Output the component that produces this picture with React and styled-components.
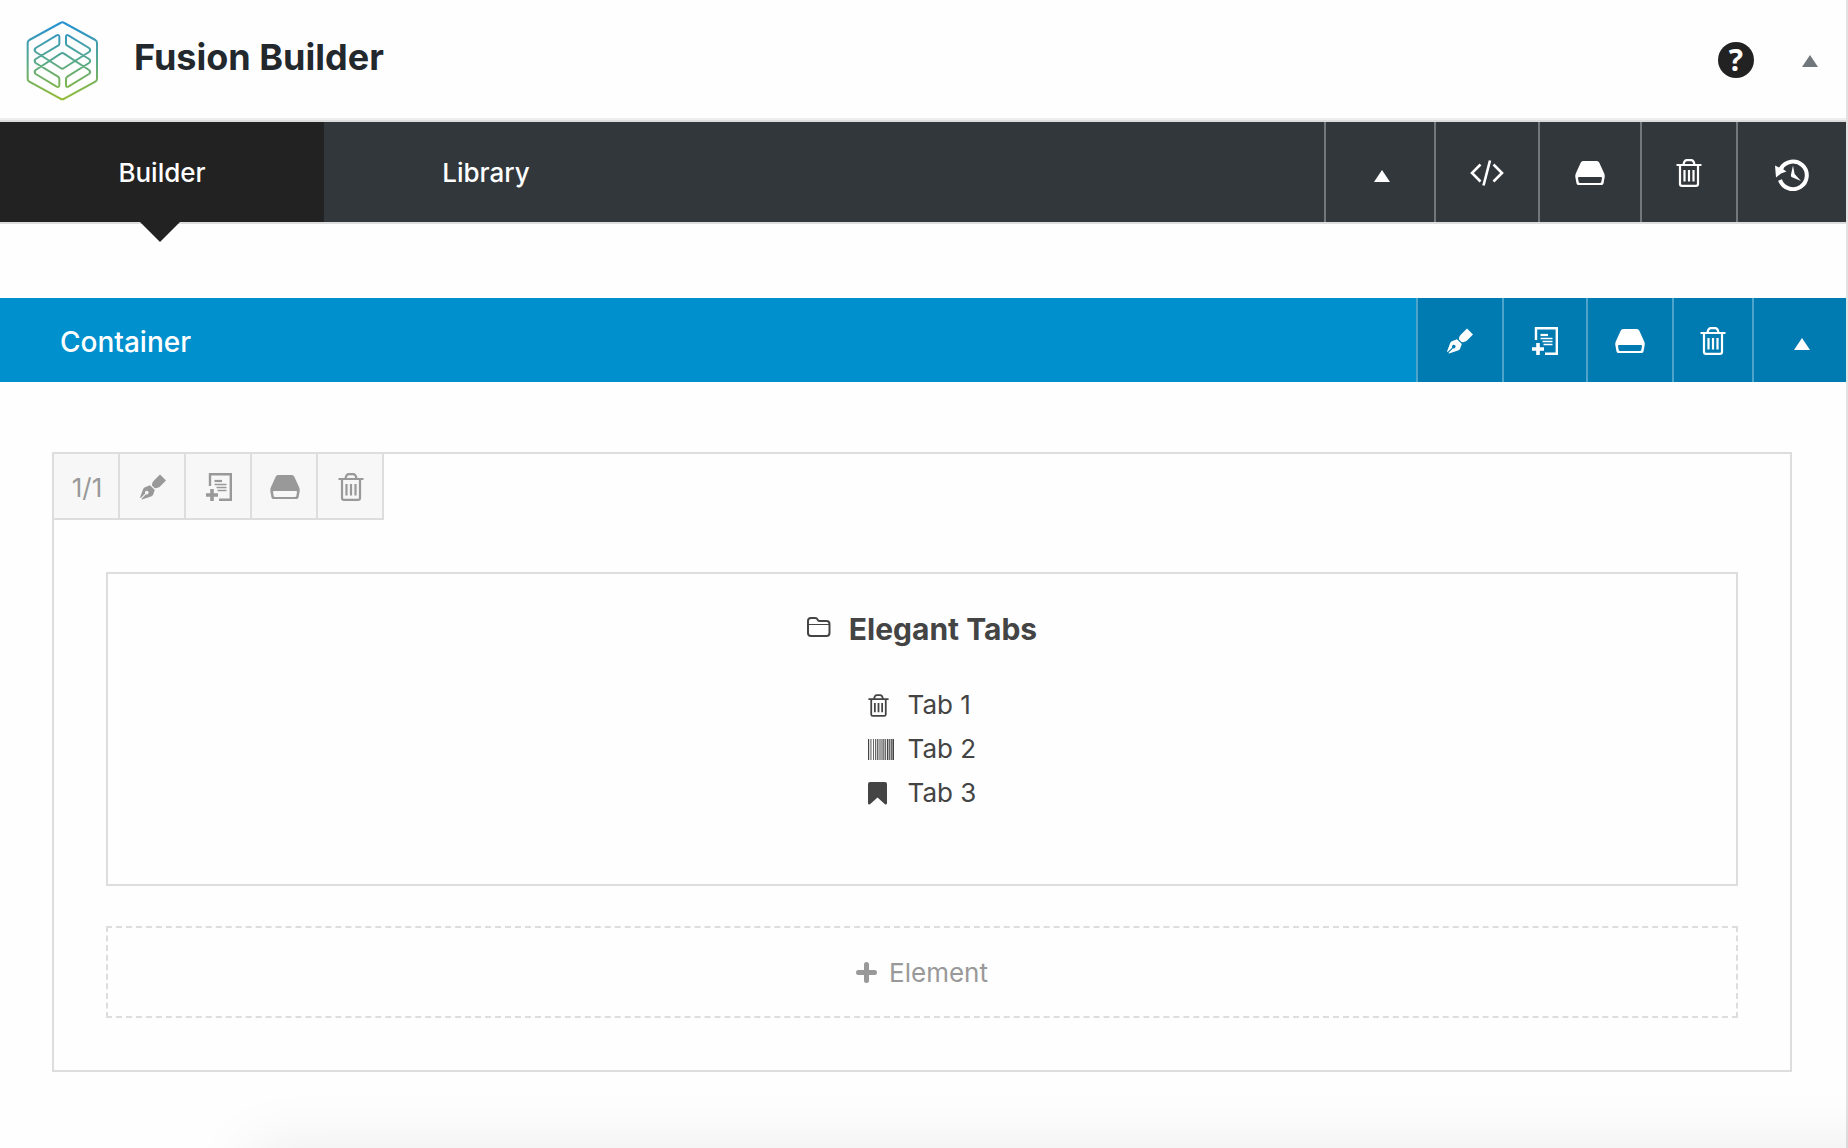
import styled, { createGlobalStyle } from "styled-components";

const GlobalStyle = createGlobalStyle`
  * {
    box-sizing: border-box;
  }
  body {
    margin: 0;
    background: #fefefe;
    font-family: Inter, "Liberation Sans", sans-serif;
    overflow-x: hidden;
  }
  button {
    font: inherit;
    border: 0;
    padding: 0;
    background: none;
    color: inherit;
    cursor: pointer;
  }
  svg {
    display: block;
    flex: none;
  }
`;

const Page = styled.div`
  min-height: 100vh;
  border-right: 2px solid #e2e2e2;
`;

const Header = styled.header`
  display: flex;
  align-items: center;
  height: 120px;
  padding: 4px 28px 0 26px;
  border-bottom: 2px solid #eee;
  color: #23282d;
`;

const Title = styled.h1`
  flex: 1;
  margin: 0 0 8px 36px;
  font-size: 36px;
  line-height: 44px;
  font-weight: 700;
`;

const Help = styled.button`
  width: 36px;
  height: 36px;
  margin: 0 48px 2px 0;
  border-radius: 50%;
  background: #222;
  color: #fff;
  font-family: "Open Sans", sans-serif;
  font-size: 30px;
  line-height: 36px;
  font-weight: 700;
`;

const Collapse = styled.button`
  color: #72777c;
`;

const NavBar = styled.nav`
  display: flex;
  height: 104px;
  border: solid #ddd;
  border-width: 2px 0;
  background: #32373c;
  color: #fff;
`;

const Tab = styled.button`
  position: relative;
  width: 324px;
  font-size: 26px;
  font-weight: 500;
  background: ${({ $active }) => ($active ? "#222" : "transparent")};
  &::after {
    content: "";
    display: ${({ $active }) => ($active ? "block" : "none")};
    position: absolute;
    top: 100%;
    left: 50%;
    margin-left: -22px;
    border: 20px solid transparent;
    border-top-color: #222;
    border-bottom: 0;
  }
`;

const Actions = styled.div`
  display: flex;
  margin-left: auto;
`;

const NavAction = styled.button`
  display: flex;
  align-items: center;
  justify-content: center;
  width: ${({ $width }) => $width}px;
  padding: ${({ $low }) => ($low ? "8px 0 0 4px" : "2px 0 0")};
  border-left: 2px solid #72777c;
`;

const ContainerBar = styled.div`
  display: flex;
  height: 84px;
  margin-top: 74px;
  background: #0090ce;
  color: #fff;
`;

const ContainerName = styled.h2`
  margin: 0;
  padding-left: 60px;
  font-size: 28px;
  line-height: 88px;
  font-weight: 500;
`;

const ContainerAction = styled(NavAction)`
  background: #007bb1;
  border-left-color: #4da3c9;
`;

const Column = styled.section`
  margin: 70px 54px 0 52px;
  border: 2px solid #ddd;
`;

const ColumnTools = styled.div`
  display: flex;
  color: #999;
`;

const ColumnAction = styled.button`
  display: flex;
  align-items: center;
  justify-content: center;
  width: 66px;
  height: 66px;
  padding: 2px 0 0 2px;
  border: solid #ddd;
  border-width: 0 2px 2px 0;
  background: #f7f7f7;
  font-size: 26px;
`;

const ColumnBody = styled.div`
  display: flex;
  flex-direction: column;
  gap: 40px;
  padding: 52px;
`;

const Element = styled.article`
  display: flex;
  flex-direction: column;
  align-items: center;
  gap: 34px;
  padding: 35px 0 69px;
  border: 2px solid #ddd;
  color: #444;
`;

const ElementTitle = styled.h3`
  display: flex;
  align-items: center;
  gap: 18px;
  margin: 0;
  font-size: 30px;
  line-height: 40px;
  font-weight: 700;
  svg {
    margin-bottom: 4px;
  }
`;

const TabList = styled.ul`
  margin: 0;
  padding: 0;
  list-style: none;
`;

const TabItem = styled.li`
  display: grid;
  grid-template-columns: 40px auto;
  align-items: center;
  font-size: 26px;
  line-height: 44px;
`;

const AddElement = styled.button`
  display: flex;
  align-items: center;
  justify-content: center;
  gap: 12px;
  height: 92px;
  border: 2px dashed #ddd;
  color: #999;
  font-size: 26px;
`;

// soft shadow that rises from below the lower edge of the window
const BottomShade = styled.div`
  position: fixed;
  left: 250px;
  right: -80px;
  bottom: -80px;
  height: 80px;
  box-shadow: 0 0 64px rgba(0, 0, 0, 0.08);
  pointer-events: none;
`;

const Logo = () => (
  <svg width="72" height="80" viewBox="78 62 216 240" fill="none">
    <defs>
      <linearGradient id="logo" gradientUnits="userSpaceOnUse" x1="187" y1="64" x2="187" y2="298">
        <stop offset="0" stopColor="#2490d6" />
        <stop offset="0.5" stopColor="#58a98c" />
        <stop offset="1" stopColor="#93bb33" />
      </linearGradient>
    </defs>
    <g stroke="url(#logo)" strokeWidth="6" strokeLinejoin="round">
      <path d="M181 68Q187 64 193 68L286 119Q291 122 291 128V235Q291 241 286 244L193 295Q187 299 181 295L88 244Q83 241 83 235V128Q83 122 88 119Z" />
      <path d="M178 130V110Q178 102 170 105L107 143Q101 149 107 155L182 203Q187 207 192 203L267 155Q274 149 267 143L205 105Q198 102 198 110V130Q198 134 202 136L267 176Q274 182 267 188L202 229Q198 232 198 236V254Q198 262 205 259L267 221Q274 215 267 209L192 160Q187 156 182 160L107 209Q101 215 107 221L170 259Q178 262 178 254V236Q178 232 174 229L107 188Q101 182 107 176L174 136Q178 134 178 130Z" />
    </g>
  </svg>
);

const Triangle = () => (
  <svg width="16" height="12" viewBox="0 0 16 12" fill="currentColor">
    <path d="M8 0L16 12H0Z" />
  </svg>
);

const CodeIcon = () => (
  <svg width="34" height="26" viewBox="0 0 34 26" fill="none" stroke="currentColor" strokeWidth="2.6">
    <path d="M10.500 4.500L2 13L10.500 21.500M23.500 4.500L32 13L23.500 21.500M20 0.500L13.500 25.500" />
  </svg>
);

const DriveIcon = () => (
  <svg width="30" height="24" viewBox="0 0 30 24" fill="currentColor" fillRule="evenodd">
    <path d="M8 0H22Q23.500 0 24.200 1.500L29 12Q30 14 29.700 16L28.500 22.500Q28 24 26.500 24H3.500Q2 24 1.500 22.500L0.300 16Q0 14 1 12L5.800 1.500Q6.500 0 8 0ZM4 16Q3 16 3 17L3.700 21Q4 22 5 22H25Q26 22 26.300 21L27 17Q27 16 26 16Z" />
  </svg>
);

const TrashIcon = ({ size = 28 }) => (
  <svg width={size - 2} height={size} viewBox="0 0 26 28" fill="none" stroke="currentColor" strokeWidth="2.2">
    <path d="M0.500 6H25.500M7.500 6Q8 1.200 11 1.200H15Q18 1.200 18.500 6M4 6V25Q4 26.800 6 26.800H20Q22 26.800 22 25V6M8.500 11V22.500M13 11V22.500M17.500 11V22.500" />
  </svg>
);

const HistoryIcon = () => (
  <svg width="34" height="36" viewBox="0 -4 34 36">
    <path d="M6 9.500A13.800 13.800 0 1 1 5 21" fill="none" stroke="currentColor" strokeWidth="4" />
    <path d="M0 6.500L4 8.500L8 6L8.500 10.500L11.500 12.500L6 14.500L1 18.500Z" fill="currentColor" />
    <path d="M18 6.500L19.600 15L26 22L16.500 18Q15.600 17 16 15.500Z" fill="currentColor" />
  </svg>
);

const PenIcon = () => (
  <svg width="26" height="26" viewBox="0 0 26 26" fill="currentColor" fillRule="evenodd">
    <path d="M20 0.500L26 6.500L19.500 13Q17 14.500 14.500 14L12 11.500Q11.500 9 13.500 7Z" />
    <path d="M10 11.200L14.800 16L13.200 20.500Q12.700 22 11 22.500L2 25.500L1.400 24.900L6 20.200A1.800 1.800 0 1 0 5.200 19.400L0.700 24.100L0 23.500L3.200 15Q3.800 13.300 5.500 12.900Z" />
  </svg>
);

const CloneIcon = () => (
  <svg width="26" height="28" viewBox="0 0 26 28" fill="none" stroke="currentColor">
    <path d="M4 13V1.200H24.800V26.800H13" strokeWidth="2.400" />
    <path d="M6 16V28M0 22H12" strokeWidth="3.600" />
    <path d="M8.500 8H16" strokeWidth="2.200" />
    <path d="M8.500 11.500H20.500M10.500 14.500H20.500M11.500 17.500H20.500" strokeWidth="1.500" />
  </svg>
);

const FolderIcon = () => (
  <svg width="24" height="20" viewBox="0 0 24 20" fill="none" stroke="currentColor" strokeWidth="2">
    <path d="M1 4Q1 1 4 1H8Q10 1 10.500 2.500Q11 4 12.500 4H19.500Q22.500 4 22.500 7V16Q22.500 19 19.500 19H4Q1 19 1 16Z" />
    <path d="M1 7.500H22.500" strokeWidth="1" />
  </svg>
);

const BARS = [
  [0, 1.2], [2, 0.5], [3.2, 0.4], [5.2, 0.8], [7.2, 1], [9.2, 1.1], [10.9, 0.6], [12.2, 0.5],
  [13.5, 1], [15.3, 1.1], [17.2, 0.9], [19, 1.4], [21.2, 0.8], [22.6, 1.2], [24.4, 1.6],
];

const BarcodeIcon = () => (
  <svg width="26" height="21" viewBox="0 0 26 21" fill="currentColor">
    {BARS.map(([x, w]) => (
      <rect key={x} x={x} width={w} height="21" />
    ))}
  </svg>
);

const BookmarkIcon = () => (
  <svg width="19" height="23" viewBox="0 0 19 23" fill="currentColor">
    <path d="M2 0H17Q19 0 19 2V21.500Q18.500 23 17 22.300L9.500 15.500L2 22.300Q0.500 23 0 21.500V2Q0 0 2 0Z" />
  </svg>
);

const PlusIcon = () => (
  <svg width="21" height="21" viewBox="0 0 21 21" fill="none" stroke="currentColor">
    <path d="M10.500 2.500V18.500M2.500 10.500H18.500" strokeWidth="5" strokeLinecap="round" strokeLinejoin="round" />
  </svg>
);

const navActions = [
  { label: "Toggle all", width: 110, low: true, icon: <Triangle /> },
  { label: "Custom CSS", width: 104, icon: <CodeIcon /> },
  { label: "Save template", width: 102, icon: <DriveIcon /> },
  { label: "Delete all", width: 96, icon: <TrashIcon /> },
  { label: "History", width: 110, icon: <HistoryIcon /> },
];

const containerActions = [
  { label: "Edit container", width: 86, icon: <PenIcon /> },
  { label: "Clone container", width: 84, icon: <CloneIcon /> },
  { label: "Save container", width: 86, icon: <DriveIcon /> },
  { label: "Delete container", width: 80, icon: <TrashIcon /> },
  { label: "Toggle container", width: 94, low: true, icon: <Triangle /> },
];

const columnActions = [
  { label: "Edit column", icon: <PenIcon /> },
  { label: "Clone column", icon: <CloneIcon /> },
  { label: "Save column", icon: <DriveIcon /> },
  { label: "Delete column", icon: <TrashIcon /> },
];

const tabs = [
  { name: "Tab 1", icon: <TrashIcon size={23} /> },
  { name: "Tab 2", icon: <BarcodeIcon /> },
  { name: "Tab 3", icon: <BookmarkIcon /> },
];

const App = () => {
  return (
    <Page>
      <GlobalStyle />
      <Header>
        <Logo />
        <Title>Fusion Builder</Title>
        <Help aria-label="Help">?</Help>
        <Collapse aria-label="Collapse panel">
          <Triangle />
        </Collapse>
      </Header>
      <NavBar>
        <Tab $active>Builder</Tab>
        <Tab>Library</Tab>
        <Actions>
          {navActions.map(({ label, width, low, icon }) => (
            <NavAction key={label} aria-label={label} $width={width} $low={low}>
              {icon}
            </NavAction>
          ))}
        </Actions>
      </NavBar>
      <ContainerBar>
        <ContainerName>Container</ContainerName>
        <Actions>
          {containerActions.map(({ label, width, low, icon }) => (
            <ContainerAction key={label} aria-label={label} $width={width} $low={low}>
              {icon}
            </ContainerAction>
          ))}
        </Actions>
      </ContainerBar>
      <Column>
        <ColumnTools>
          <ColumnAction>1/1</ColumnAction>
          {columnActions.map(({ label, icon }) => (
            <ColumnAction key={label} aria-label={label}>
              {icon}
            </ColumnAction>
          ))}
        </ColumnTools>
        <ColumnBody>
          <Element>
            <ElementTitle>
              <FolderIcon />
              Elegant Tabs
            </ElementTitle>
            <TabList>
              {tabs.map(({ name, icon }) => (
                <TabItem key={name}>
                  {icon}
                  {name}
                </TabItem>
              ))}
            </TabList>
          </Element>
          <AddElement>
            <PlusIcon />
            Element
          </AddElement>
        </ColumnBody>
      </Column>
      <BottomShade />
    </Page>
  );
};

export default App;
